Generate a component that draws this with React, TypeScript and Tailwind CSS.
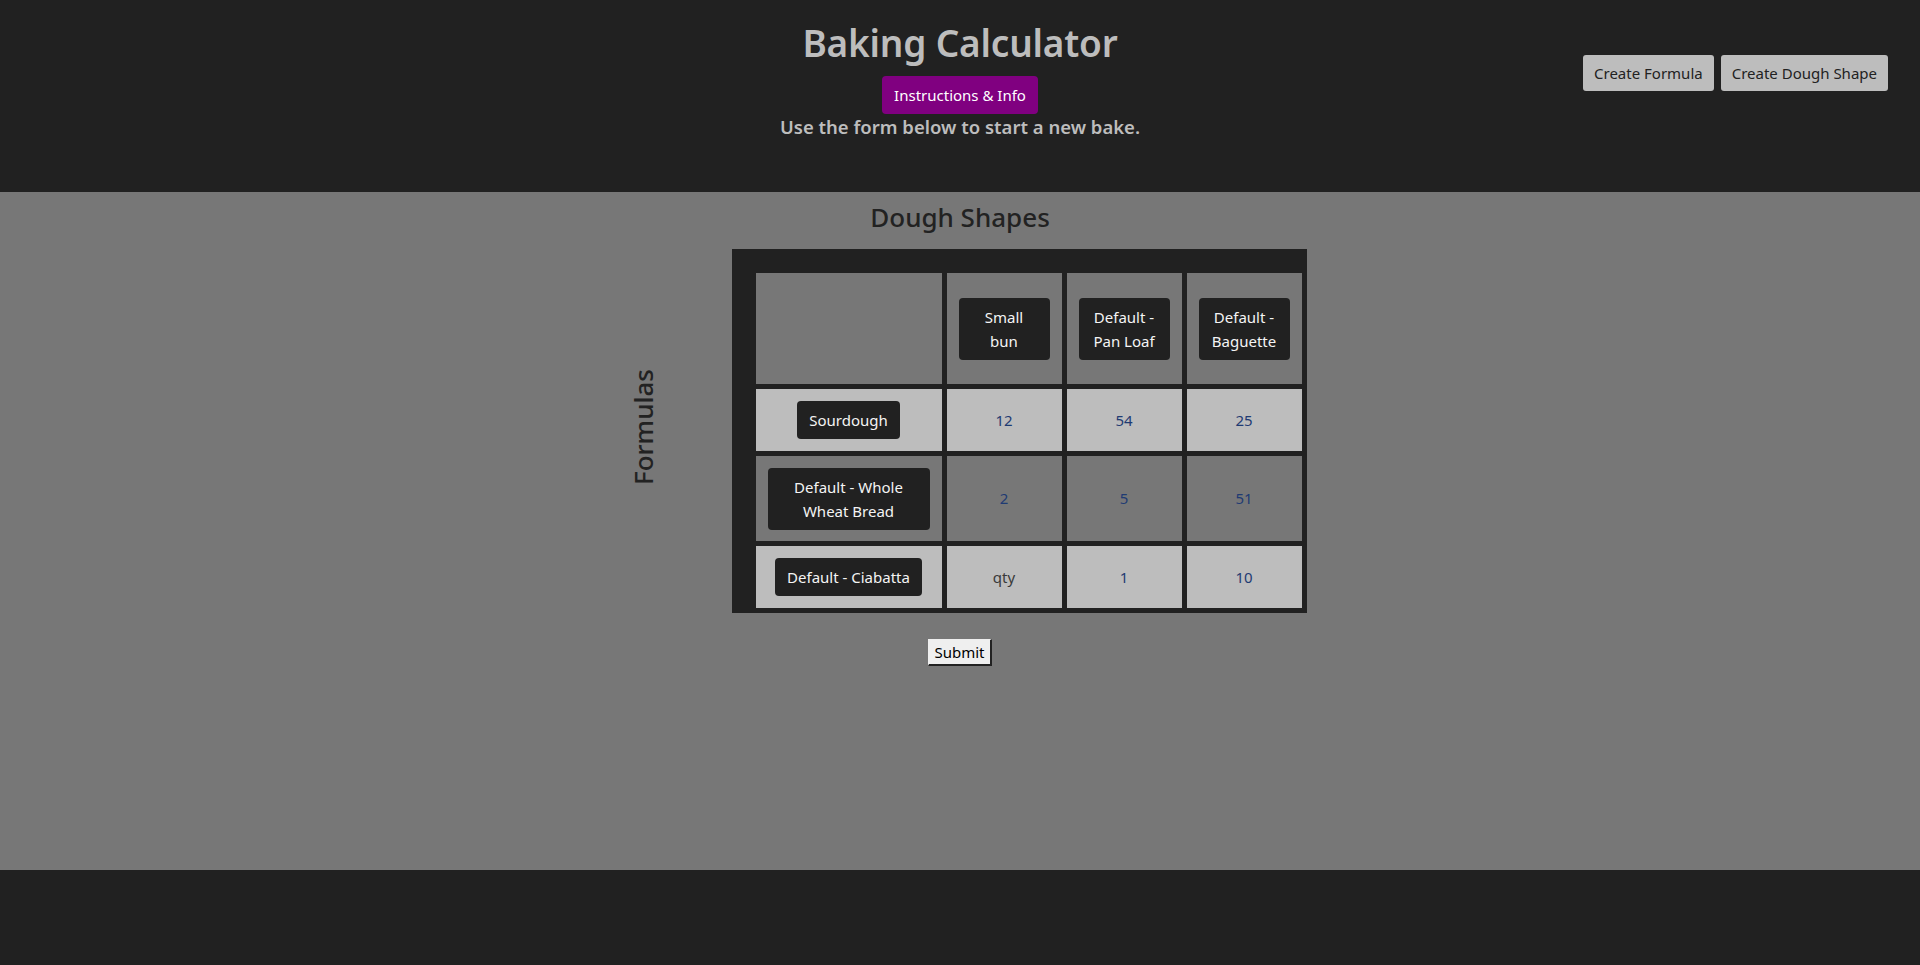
import React from 'react';

const shapes = ['Small bun', 'Default - Pan Loaf', 'Default - Baguette'];

const formulas = [
  { name: 'Sourdough', qty: ['12', '54', '25'], light: true },
  { name: 'Default - Whole Wheat Bread', qty: ['2', '5', '51'], light: false },
  { name: 'Default - Ciabatta', qty: ['', '1', '10'], light: true },
];

function DarkButton({ children }: { children: React.ReactNode }) {
  return (
    <button className="bg-[#212121] text-[#f4f4f4] text-[15px] leading-6 px-3 py-[7px] rounded-[4px]">
      {children}
    </button>
  );
}

export default function App() {
  return (
    <div className="min-h-screen flex flex-col font-['Noto_Sans',sans-serif] bg-[#212121]">
      {/* Header */}
      <header className="relative h-[192px] bg-[#212121] flex flex-col items-center pt-[19px]">
        <h1 className="text-[#bdbdbd] text-[37px] leading-[48px] font-semibold tracking-[-0.2px]">Baking Calculator</h1>
        <button className="mt-[9px] bg-[#800080] text-white text-[15px] h-[38px] px-3 rounded-[4px]">
          Instructions &amp; Info
        </button>
        <p className="mt-[1px] text-[#bdbdbd] text-[18.5px] leading-6 font-semibold">Use the form below to start a new bake.</p>

        <div className="absolute right-[32px] top-[55px] flex gap-[7px]">
          <button className="h-[36px] px-[11px] bg-[#bdbdbd] text-[#222] text-[15px] rounded-[3px]">Create Formula</button>
          <button className="h-[36px] px-[11px] bg-[#bdbdbd] text-[#222] text-[15px] rounded-[3px]">Create Dough Shape</button>
        </div>
      </header>

      {/* Main */}
      <main className="h-[678px] bg-[#777777] flex flex-col items-center">
        <h2 className="mt-[8px] text-[#222] text-[26px] leading-[34px] font-medium">Dough Shapes</h2>

        <div className="mt-[15px] flex items-center">
          <div className="w-[118px] pl-[13px] pb-[8px] flex">
            <span className="[writing-mode:vertical-rl] rotate-180 text-[#222] text-[26px] leading-[32px] font-medium">Formulas</span>
          </div>

          <div className="bg-[#212121] pl-[24px] pt-[24px] pr-[5px] pb-[5px]">
            <div className="grid grid-cols-[186px_115px_115px_115px] grid-rows-[111px_62px_85px_62px] gap-[5px]">
              <div className="bg-[#777777]" />
              {shapes.map((s) => (
                <div key={s} className="bg-[#777777] flex items-center justify-center px-3">
                  <DarkButton>{s}</DarkButton>
                </div>
              ))}

              {formulas.map((f) => (
                <React.Fragment key={f.name}>
                  <div className={`${f.light ? 'bg-[#bdbdbd]' : 'bg-[#777777]'} flex items-center justify-center px-3 text-center`}>
                    <DarkButton>{f.name}</DarkButton>
                  </div>
                  {f.qty.map((q, i) => (
                    <div
                      key={i}
                      className={`${f.light ? 'bg-[#bdbdbd]' : 'bg-[#777777]'} flex items-center justify-center text-[15px]`}
                    >
                      {q ? <span className="text-[#1f3b73]">{q}</span> : <span className="text-[#3a3a3a]">qty</span>}
                    </div>
                  ))}
                </React.Fragment>
              ))}
            </div>
          </div>
        </div>

        <button className="mt-[26px] h-[27px] px-[5px] bg-[#efefef] text-black text-[15px] leading-5 border border-[#efefef] border-r-2 border-b-2 border-r-[#222] border-b-[#222]">
          Submit
        </button>
      </main>

      {/* Footer */}
      <footer className="flex-1 bg-[#212121]" />
    </div>
  );
}
